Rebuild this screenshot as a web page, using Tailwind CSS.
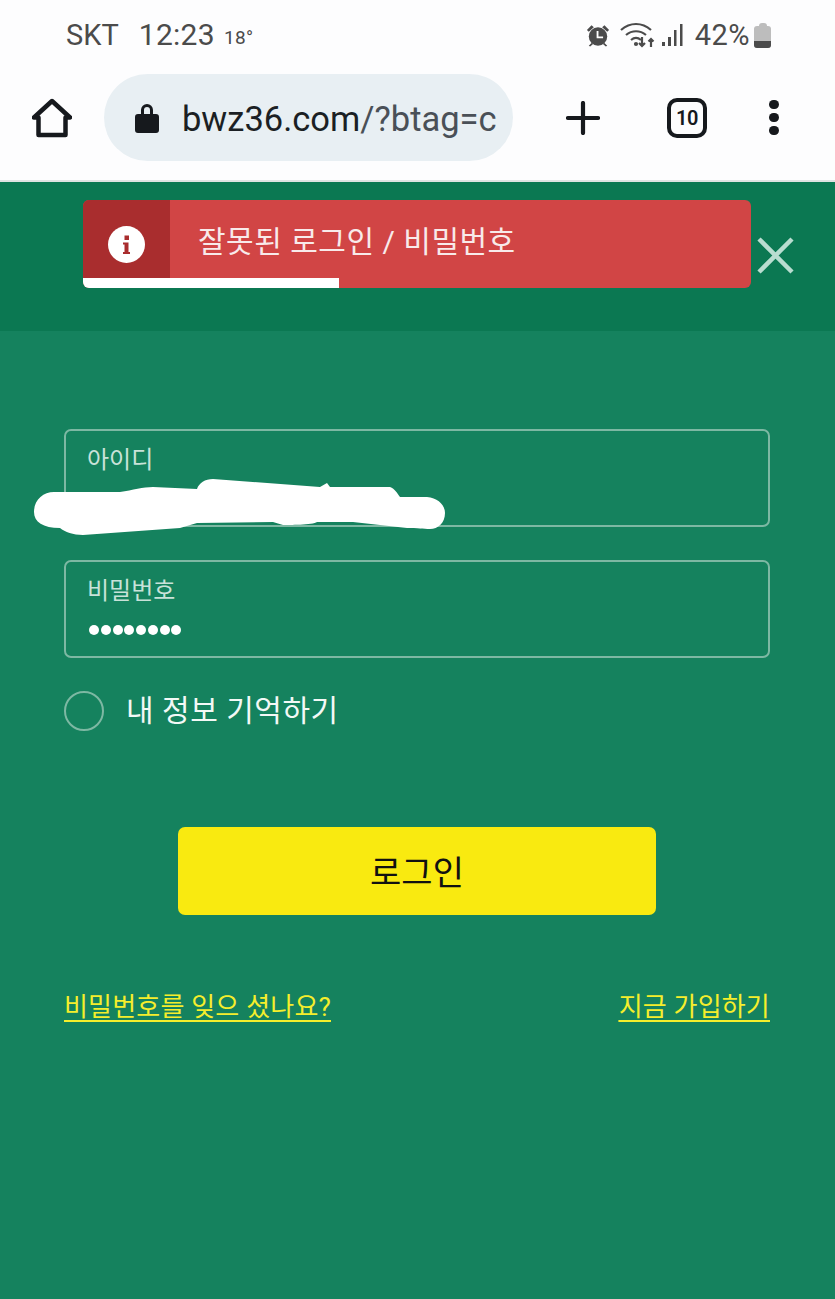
<!DOCTYPE html>
<html lang="ko">
<head>
<meta charset="utf-8">
<script src="https://cdn.jsdelivr.net/npm/@tailwindcss/browser@4"></script>
</head>
<body class="relative w-[835px] h-[1299px] overflow-hidden bg-[#15825e] font-['Roboto','Noto_Sans_CJK_KR',sans-serif]">
  <header class="h-[182px] bg-[#fdfdfe] border-b-2 border-[#dfe3e2] flex flex-col">
    <div class="h-[70px] flex items-center justify-between pl-[66px] pr-[64px] text-[#4b4b4b]">
      <div class="flex items-baseline">
        <span class="text-[29px] leading-none">SKT</span>
        <span class="text-[30px] leading-none ml-[20px] tracking-[0.3px]">12:23</span>
        <span class="text-[19px] leading-none ml-[9px] tracking-[0.3px] relative -top-[1px]">18°</span>
      </div>
      <div class="flex items-center">
        <svg class="w-[24px] h-[25px]" viewBox="0 0 26 26" fill="#4b4b4b"><circle cx="13" cy="14" r="10"/><path d="M1 7l5-5 2.500 2-5.500 5zM25 7l-5-5-2.500 2 5.500 5zM6 21l-3 3 1.500 1 3.500-3zM20 21l3 3-1.500 1-3.500-3z"/><path d="M12.500 8v7h6" fill="none" stroke="#fff" stroke-width="2"/></svg>
        <svg class="w-[37px] h-[26px] ml-[10px]" viewBox="0 0 37 26" fill="none" stroke="#4b4b4b" stroke-width="2.200"><path d="M1 8c9-8 21-8 30 0M6 13c6-5 14-5 20 0M11 18c3-2.500 7-2.500 10 0"/><path d="M22 15v9M19 21l3 3 3-3M31 25v-8M28.500 19.500l2.500-2.500 2.500 2.500"/><circle cx="16" cy="22" r="1" fill="#4b4b4b"/></svg>
        <svg class="w-[22px] h-[24px] ml-[5px]" viewBox="0 0 22 24" fill="#4b4b4b"><rect x="0" y="19" width="3" height="4"/><rect x="6" y="14" width="3" height="9"/><rect x="12" y="7" width="2.500" height="16"/><rect x="18" y="1" width="2.500" height="22"/></svg>
        <span class="text-[29px] leading-none ml-[11px] tracking-[0.5px]">42%</span>
        <div class="relative w-[17px] h-[25px] ml-[4px] mt-[1px]">
          <div class="mx-auto w-[8px] h-[3px] bg-[#bdbdbd] rounded-t-sm"></div>
          <div class="h-[22px] rounded-[3px] bg-[#bdbdbd] overflow-hidden flex flex-col justify-end"><div class="h-[7px] bg-[#4b4b4b]"></div></div>
        </div>
      </div>
    </div>
    <div class="flex-1 relative flex items-start">
      <svg class="absolute left-[32px] top-[28px] w-[40px] h-[40px]" viewBox="0 0 40 40" fill="none" stroke="#16191d" stroke-width="4.500" stroke-linejoin="round"><path d="M2 19.500 20 3l18 16.500h-4.500V37h-27V19.500z"/></svg>
      <div class="absolute left-[104px] top-[4px] w-[409px] h-[87px] rounded-full bg-[#e8eff3] flex items-center">
        <svg class="ml-[31px] w-[24px] h-[32px] shrink-0" viewBox="0 0 24 32" fill="#16191d"><path fill-rule="evenodd" d="M6 12V8a6 6 0 0 1 12 0v4h3a3 3 0 0 1 3 3v13a3 3 0 0 1-3 3H3a3 3 0 0 1-3-3V15a3 3 0 0 1 3-3zm3 0h6V8a3 3 0 0 0-6 0z"/></svg>
        <span class="ml-[23px] mt-[3px] whitespace-nowrap text-[34.500px] leading-none text-[#4a5057]"><span class="text-[#1b1f24]">bwz36.com</span>/?btag=c</span>
      </div>
      <svg class="absolute left-[566px] top-[31px] w-[34px] h-[34px]" viewBox="0 0 34 34" stroke="#16191d" stroke-width="4.200" stroke-linecap="round"><path d="M2 17h30M17 2v30"/></svg>
      <div class="absolute left-[667px] top-[28px] w-[40px] h-[40px] rounded-[10px] border-[4px] border-[#16191d] flex items-center justify-center text-[20px] font-semibold leading-none tracking-[-0.5px] text-[#16191d]">10</div>
      <div class="absolute left-[769px] top-[30px] flex flex-col gap-[4px]">
        <div class="w-[10px] h-[9px] rounded-full bg-[#16191d]"></div>
        <div class="w-[10px] h-[9px] rounded-full bg-[#16191d]"></div>
        <div class="w-[10px] h-[9px] rounded-full bg-[#16191d]"></div>
      </div>
    </div>
  </header>

  <section class="h-[149px] bg-[#0b7852] relative">
    <div class="absolute left-[83px] top-[18px] w-[668px] h-[88px] rounded-[6px] bg-[#d14545] overflow-hidden">
      <div class="flex h-[78px]">
        <div class="w-[87px] bg-[#a92d2e] flex items-center justify-center pt-[10px]">
          <svg class="w-[37px] h-[37px]" viewBox="0 0 37 37"><circle cx="18.500" cy="18.500" r="18.500" fill="#fff"/><rect x="16.500" y="9.500" width="4.500" height="4.500" fill="#a92d2e"/><path d="M15 16.500h5.500v9.500h1.500v2h-7v-2h1.500v-7.500h-1.500z" fill="#a92d2e"/></svg>
        </div>
        <div class="pl-[28px] pt-[27px] text-[30px] leading-none text-[#f8eaea] tracking-[0.5px]">잘못된 로그인 / 비밀번호</div>
      </div>
      <div class="h-[10px] w-[256px] bg-white"></div>
    </div>
    <svg class="absolute left-[757px] top-[55px] w-[37px] h-[37px]" viewBox="0 0 37 37" stroke="#b9ddd0" stroke-width="4.500"><path d="M2 2l33 33M35 2 2 35"/></svg>
  </section>

  <main class="pl-[64px] pr-[65px] pt-[98px]">
    <div class="h-[98px] rounded-[7px] border-2 border-[#7db8a3] pl-[21px] pt-[17px]">
      <div class="text-[24px] leading-none text-[#c9e2d9]">아이디</div>
    </div>
    <div class="mt-[33px] h-[98px] rounded-[7px] border-2 border-[#7db8a3] pl-[21px] pt-[17px]">
      <div class="text-[24px] leading-none text-[#c9e2d9]">비밀번호</div>
      <div class="mt-[22px] ml-[2px] flex gap-[1.750px]">
        <i class="w-[10px] h-[10px] rounded-full bg-white"></i><i class="w-[10px] h-[10px] rounded-full bg-white"></i><i class="w-[10px] h-[10px] rounded-full bg-white"></i><i class="w-[10px] h-[10px] rounded-full bg-white"></i><i class="w-[10px] h-[10px] rounded-full bg-white"></i><i class="w-[10px] h-[10px] rounded-full bg-white"></i><i class="w-[10px] h-[10px] rounded-full bg-white"></i><i class="w-[10px] h-[10px] rounded-full bg-white"></i>
      </div>
    </div>
    <div class="mt-[33px] flex items-center">
      <div class="w-[40px] h-[40px] rounded-full border-2 border-[#7db8a3]"></div>
      <span class="ml-[22px] text-[30px] leading-none text-[#f3f9f6] tracking-[0.5px]">내 정보 기억하기</span>
    </div>
    <button class="block mx-auto mt-[96px] w-[478px] h-[88px] pt-[5px] rounded-[7px] bg-[#f9ea10] text-[34px] text-[#111]">로그인</button>
    <div class="mt-[76px] flex justify-between text-[26px] leading-[32px] tracking-[0.2px] text-[#f5ee2c] underline underline-offset-[4px]">
      <a>비밀번호를 잊으 셨나요?</a>
      <a>지금 가입하기</a>
    </div>
  </main>

  <svg class="absolute left-[33px] top-[478px] w-[414px] h-[60px] pointer-events-none" viewBox="0 0 414 60" fill="#fff"><path d="M21 14 L30 14 L87 14 C100 12 110 9 120 9 L164 11 C166 5 172 1 180 1 L287 9 L294 5 L297 9 L357 9 C362 11 364 15 367 19 L394 19 C405 20 412 27 412 35 C412 45 405 51 397 51 C390 51 385 50 374 50 L320 44 L284 44 C280 47 255 47 250 47 L240 44 L164 45 L147 50 L50 57 C40 57 32 54 27 50 C10 50 1 44 1 34 C1 22 10 14 21 14Z"/></svg>
</body>
</html>
